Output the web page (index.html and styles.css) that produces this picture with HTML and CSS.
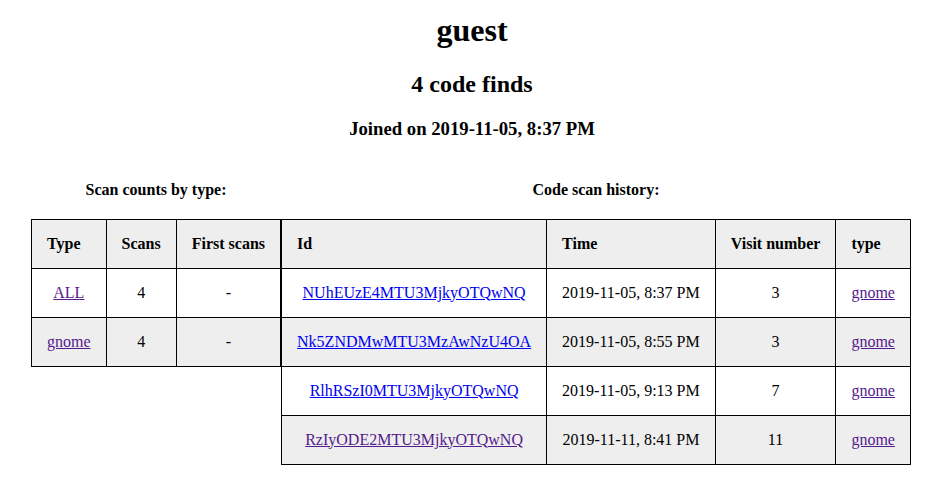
FILE: index.html
```html
<!DOCTYPE html>
<html>
<head>
<meta charset="utf-8">
<link rel="stylesheet" href="styles.css">
</head>
<body>
<div class="page">
  <h1 class="title">guest</h1>
  <h2 class="subtitle">4 code finds</h2>
  <h3 class="joined">Joined on 2019-11-05, 8:37 PM</h3>
  <div class="tables">
    <div class="panel">
      <h4 class="caption">Scan counts by type:</h4>
      <table class="grid">
        <tr><th>Type</th><th>Scans</th><th>First scans</th></tr>
        <tr><td><a class="visited" href="#">ALL</a></td><td>4</td><td>-</td></tr>
        <tr><td><a class="visited" href="#">gnome</a></td><td>4</td><td>-</td></tr>
      </table>
    </div>
    <div class="panel">
      <h4 class="caption">Code scan history:</h4>
      <table class="grid">
        <tr><th>Id</th><th>Time</th><th>Visit number</th><th>type</th></tr>
        <tr><td><a class="link" href="#">NUhEUzE4MTU3MjkyOTQwNQ</a></td><td>2019-11-05, 8:37 PM</td><td>3</td><td><a class="visited" href="#">gnome</a></td></tr>
        <tr><td><a class="link" href="#">Nk5ZNDMwMTU3MzAwNzU4OA</a></td><td>2019-11-05, 8:55 PM</td><td>3</td><td><a class="visited" href="#">gnome</a></td></tr>
        <tr><td><a class="link" href="#">RlhRSzI0MTU3MjkyOTQwNQ</a></td><td>2019-11-05, 9:13 PM</td><td>7</td><td><a class="visited" href="#">gnome</a></td></tr>
        <tr><td><a class="visited" href="#">RzIyODE2MTU3MjkyOTQwNQ</a></td><td>2019-11-11, 8:41 PM</td><td>11</td><td><a class="visited" href="#">gnome</a></td></tr>
      </table>
    </div>
  </div>
</div>
</body>
</html>
```
FILE: styles.css
```css
html, body {
  margin: 0;
  padding: 0;
  background: #fff;
}
body {
  font-family: "Liberation Serif", "Times New Roman", serif;
  color: #000;
}
.page {
  padding: 12px 9px 8px 8px;
  text-align: center;
}
.title {
  font-size: 32px;
  margin: 0 0 22px;
}
.subtitle {
  font-size: 24px;
  margin: 0 0 19.92px;
}
.joined {
  font-size: 18.72px;
  margin: 0 0 18.72px;
}
.tables {
  display: flex;
  justify-content: center;
  align-items: flex-start;
  padding-right: 2px;
}
.panel {
  display: flex;
  flex-direction: column;
  align-items: center;
}
.caption {
  font-size: 16px;
  margin: 22px 0 20px;
}
.grid {
  border-collapse: collapse;
  font-size: 16px;
  line-height: 18px;
}
.grid th, .grid td {
  border: 1px solid #000;
  padding: 15px;
  white-space: nowrap;
}
.grid th {
  text-align: left;
  font-weight: bold;
}
.grid td {
  text-align: center;
}
.grid tr:nth-child(odd) {
  background: #eeeeee;
}
.link {
  color: #0000ee;
}
.visited {
  color: #551a8b;
}
```
